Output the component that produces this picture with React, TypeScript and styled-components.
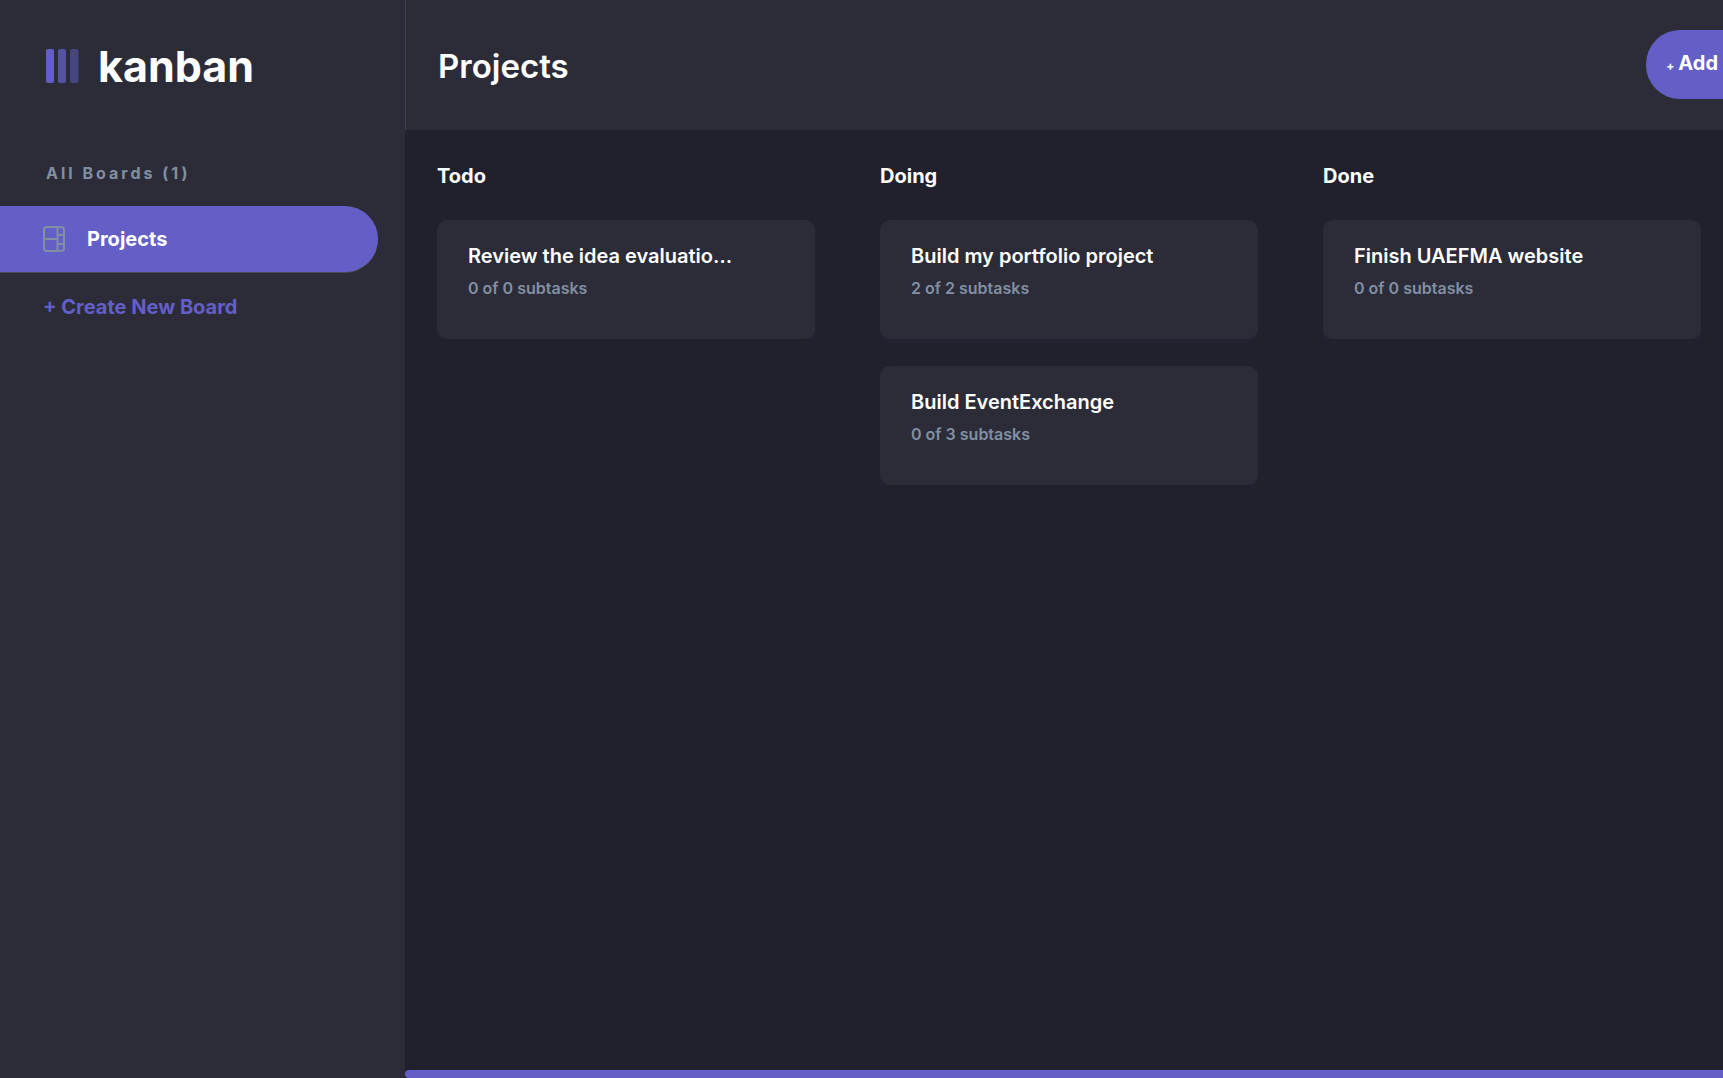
import React from "react";
import styled, { createGlobalStyle } from "styled-components";

const color = {
  panel: "#2b2c37",
  board: "#20212c",
  line: "#3e3f4e",
  accent: "#635fc7",
  muted: "#828fa3",
  text: "#ffffff",
};

const GlobalStyle = createGlobalStyle`
  *, *::before, *::after { box-sizing: border-box; }
  body {
    margin: 0;
    background: ${color.board};
    color: ${color.text};
    font-family: Inter, "Open Sans", sans-serif;
  }
  h1, h2, h3, p, ul { margin: 0; padding: 0; }
  ul { list-style: none; }
  button { border: 0; font: inherit; cursor: pointer; }
`;

const Shell = styled.div`
  display: grid;
  grid-template-columns: 405px minmax(0, 1fr);
  min-height: 100vh;
`;

const Sidebar = styled.aside`
  display: flex;
  flex-direction: column;
  background: ${color.panel};
`;

const Brand = styled.a`
  display: flex;
  align-items: center;
  gap: 18px;
  height: 130px;
  padding: 2px 0 0 46px;
  color: ${color.text};
  font-size: 43px;
  font-weight: 700;
  text-decoration: none;
`;

const BoardsHeading = styled.h2`
  padding: 32px 46px 22px;
  color: ${color.muted};
  font-size: 16px;
  font-weight: 700;
  line-height: 22px;
  letter-spacing: 3px;
`;

const BoardButton = styled.button`
  display: flex;
  align-items: center;
  gap: 21px;
  width: calc(100% - 27px);
  height: 66px;
  padding: 0 42px;
  border-radius: 0 33px 33px 0;
  background: ${color.accent};
  box-shadow: 0 1px 0 #4a4a52;
  color: ${color.text};
  font-size: 20px;
  font-weight: 700;
`;

const CreateButton = styled.button`
  align-self: flex-start;
  margin-top: 22px;
  padding: 0 43px;
  background: none;
  color: ${color.accent};
  font-size: 20px;
  font-weight: 700;
  line-height: 26px;
`;

const Workspace = styled.div`
  display: flex;
  flex-direction: column;
  min-width: 0;
`;

const Header = styled.header`
  display: flex;
  justify-content: space-between;
  height: 130px;
  padding: 30px 0 0 32px;
  border-left: 1px solid ${color.line};
  background: ${color.panel};
`;

const BoardTitle = styled.h1`
  font-size: 33px;
  font-weight: 600;
  line-height: 72px;
`;

const AddButton = styled.button`
  display: flex;
  align-items: center;
  gap: 4px;
  height: 69px;
  padding: 0 5px 4px 20px;
  border-radius: 34px 0 0 34px;
  background: ${color.accent};
  color: ${color.text};
  font-size: 20px;
  font-weight: 700;
`;

const Plus = styled.span`
  padding-top: 6px;
  font-size: 12px;
`;

const Columns = styled.main`
  display: flex;
  flex: 1;
  gap: 65px;
  padding: 32px 22px 32px 32px;
  overflow: hidden;
`;

const Column = styled.section`
  flex: 0 0 378px;
`;

const ColumnTitle = styled.h2`
  margin-bottom: 30px;
  font-size: 20px;
  font-weight: 700;
  line-height: 28px;
`;

const CardList = styled.ul`
  display: flex;
  flex-direction: column;
  gap: 27px;
  overflow: hidden;
`;

const Card = styled.li`
  height: 119px;
  padding: 22px 31px;
  border-radius: 10px;
  background: ${color.panel};
  box-shadow: 0 4px 6px rgba(54, 78, 126, 0.1);
`;

const CardTitle = styled.h3`
  margin-bottom: 6px;
  font-size: 20px;
  font-weight: 600;
  line-height: 28px;
  white-space: nowrap;
`;

const CardMeta = styled.p`
  color: ${color.muted};
  font-size: 16px;
  font-weight: 600;
  line-height: 24px;
`;

const ScrollThumb = styled.div`
  height: 8px;
  border-radius: 4px 0 0 4px;
  background: ${color.accent};
`;

const columns = [
  { name: "Todo", tasks: [{ title: "Review the idea evaluatio…", done: 0, total: 0 }] },
  {
    name: "Doing",
    tasks: [
      { title: "Build my portfolio project", done: 2, total: 2 },
      { title: "Build EventExchange", done: 0, total: 3 },
    ],
  },
  { name: "Done", tasks: [{ title: "Finish UAEFMA website", done: 0, total: 0 }] },
];

function LogoMark() {
  return (
    <svg width="34" height="34" viewBox="0 0 34 34" fill={color.accent} aria-hidden="true">
      <rect width="8" height="34" rx="2" />
      <rect x="12" width="8" height="34" rx="2" opacity="0.75" />
      <rect x="24" width="8.5" height="34" rx="2" opacity="0.5" />
    </svg>
  );
}

function BoardIcon() {
  return (
    <svg width="24" height="26" viewBox="0 0 24 26" fill="none" stroke={color.muted} strokeWidth="2" aria-hidden="true">
      <rect x="2" y="1" width="20" height="24" rx="3" />
      <path d="M15.500 1v24M2 13h13.500M15.500 9H22M15.500 18H22" />
    </svg>
  );
}

export default function App() {
  return (
    <>
      <GlobalStyle />
      <Shell>
        <Sidebar>
          <Brand href="#">
            <LogoMark />
            kanban
          </Brand>
          <BoardsHeading>All Boards (1)</BoardsHeading>
          <BoardButton type="button">
            <BoardIcon />
            Projects
          </BoardButton>
          <CreateButton type="button">+ Create New Board</CreateButton>
        </Sidebar>
        <Workspace>
          <Header>
            <BoardTitle>Projects</BoardTitle>
            <AddButton type="button">
              <Plus>+</Plus>
              Add
            </AddButton>
          </Header>
          <Columns>
            {columns.map((column) => (
              <Column key={column.name}>
                <ColumnTitle>{column.name}</ColumnTitle>
                <CardList>
                  {column.tasks.map((task) => (
                    <Card key={task.title}>
                      <CardTitle>{task.title}</CardTitle>
                      <CardMeta>
                        {`${task.done} of ${task.total} subtasks`}
                      </CardMeta>
                    </Card>
                  ))}
                </CardList>
              </Column>
            ))}
          </Columns>
          <ScrollThumb />
        </Workspace>
      </Shell>
    </>
  );
}
